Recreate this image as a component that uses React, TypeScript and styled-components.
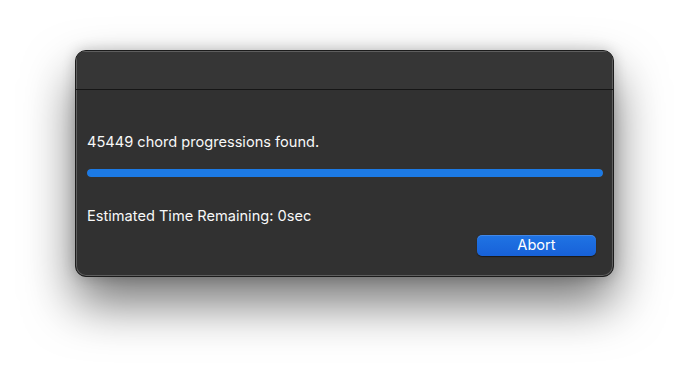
import styled, { createGlobalStyle } from 'styled-components';

const GlobalStyle = createGlobalStyle`
  html, body {
    margin: 0;
    padding: 0;
    background: #ffffff;
  }
  body {
    font-family: Inter, "Noto Sans", "Liberation Sans", sans-serif;
    -webkit-font-smoothing: antialiased;
  }
`;

function ProgressDialog() {
  const progress = 100;

  return (
    <Window>
      <TitleBar />
      <Body>
        <Message>45449 chord progressions found.</Message>
        <Track>
          <Fill style={{ width: `${progress}%` }} />
        </Track>
        <Message>Estimated Time Remaining: 0sec</Message>
        <Actions>
          <Button type="button">Abort</Button>
        </Actions>
      </Body>
    </Window>
  );
}

export default function App() {
  return (
    <Page>
      <GlobalStyle />
      <ProgressDialog />
    </Page>
  );
}

const Page = styled.div`
  width: 690px;
  height: 377px;
  box-sizing: border-box;
  padding: 50px 0 0 75px;
  background: #ffffff;
  overflow: hidden;
`;

const Window = styled.div`
  width: 539px;
  height: 227px;
  box-sizing: border-box;
  display: flex;
  flex-direction: column;
  border-radius: 11px;
  background: #313131;
  border: 1px solid #1c1c1c;
  box-shadow:
    inset 0 0 0 1px #5e5e5e,
    0 26px 50px rgba(0, 0, 0, 0.55),
    0 0 14px rgba(0, 0, 0, 0.2);
  overflow: hidden;
`;

const TitleBar = styled.div`
  height: 38px;
  flex-shrink: 0;
  background: #363636;
  border-bottom: 1px solid #161616;
  box-shadow: inset 0 1px 0 #5e5e5e, inset 1px 0 0 #5e5e5e, inset -1px 0 0 #5e5e5e;
`;

const Body = styled.div`
  flex: 1;
  display: flex;
  flex-direction: column;
  padding: 44px 10px 0 11px;
`;

const Message = styled.div`
  font-size: 14.6px;
  font-weight: 400;
  line-height: 17px;
  color: #f8f8f8;
`;

const Track = styled.div`
  height: 8px;
  margin: 18px 0 31px 0;
  border-radius: 4px;
  background: #4a4a4a;
  overflow: hidden;
`;

const Fill = styled.div`
  height: 100%;
  border-radius: 4px;
  background: #1c7ae5;
`;

const Actions = styled.div`
  display: flex;
  justify-content: flex-end;
  padding: 10px 7px 0 0;
`;

const Button = styled.button`
  width: 119px;
  height: 21px;
  padding: 0;
  border: none;
  border-radius: 5px;
  background: linear-gradient(#2074e4, #1761d8);
  box-shadow: inset 0 1px 0 rgba(255, 255, 255, 0.15), 0 0.5px 1px rgba(0, 0, 0, 0.5);
  color: #ffffff;
  font-family: inherit;
  font-size: 14.6px;
  font-weight: 400;
  line-height: 21px;
`;
